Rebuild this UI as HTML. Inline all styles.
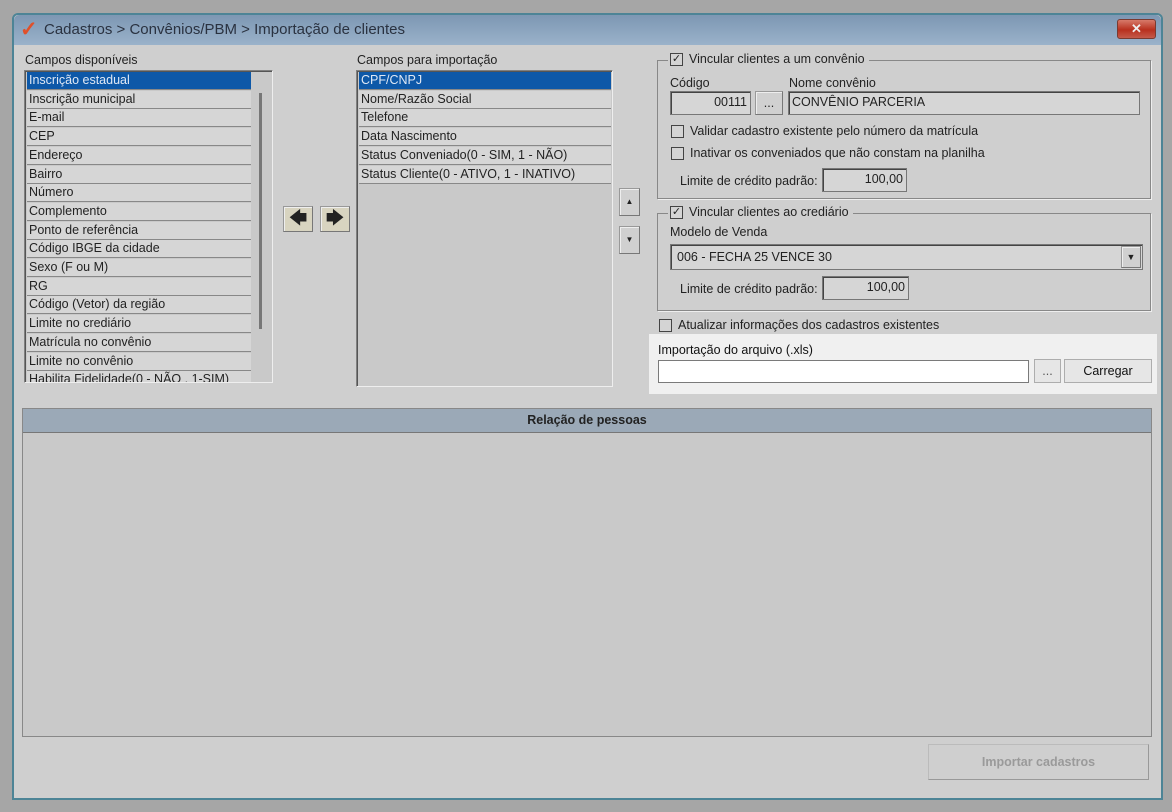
<!DOCTYPE html>
<html><head><meta charset="utf-8"><style>
*{box-sizing:border-box;margin:0;padding:0}
body{width:1172px;height:812px;background:#a6a6a6;font-family:"Liberation Sans",sans-serif;font-size:12.5px;color:#222;position:relative;overflow:hidden}
.a{position:absolute}
.win{left:12px;top:13px;width:1151px;height:787px;background:#cfcfcf;border:2px solid #4d8496;border-radius:6px 6px 0 0}
.title{left:14px;top:15px;width:1147px;height:30px;background:linear-gradient(#7d97b3,#9ab2ca);border-radius:5px 5px 0 0}
.lb{background:#c9c9c9;border:1px solid #808080;border-right-color:#eee;border-bottom-color:#eee;box-shadow:inset 1px 1px 0 #555}
.row{position:absolute;left:2px;height:18px;border-bottom:1px solid #888;background:#d6d6d6;padding-left:2px;line-height:17px;white-space:nowrap;overflow:hidden}
.sel{background:#0d58a8;color:#dfe8f5}
.inp{background:#d6d6d6;border:1px solid #777;box-shadow:inset 1px 1px 0 #444;line-height:20px;padding:0 3px}
.btn{background:#d0d0d0;border:1px solid #999;border-right-color:#777;border-bottom-color:#777;box-shadow:inset 1px 1px 0 #eee;text-align:center}
.grp{border:1px solid #888;box-shadow:1px 1px 0 #eee}
.cb{width:13px;height:13px;border:1px solid #444;background:#d4d4d4}
</style></head><body>
<div class="a win"></div>
<div class="a title"></div>
<div class="a" style="left:20px;top:17px;font-size:21px;color:#e0502a;font-weight:bold">✓</div>
<div class="a" style="left:44px;top:21px;font-size:15px;color:#2a3240">Cadastros &gt; Convênios/PBM &gt; Importação de clientes</div>
<div class="a" style="left:1117px;top:19px;width:39px;height:20px;border-radius:3px;background:linear-gradient(#d67a6a,#b8301e 55%,#c45a4a);border:1px solid #7a3a30;color:#eee;font-weight:bold;text-align:center;line-height:18px;font-size:13px">✕</div>

<div class="a" style="left:25px;top:53px">Campos disponíveis</div>
<div class="a lb" style="left:24px;top:70px;width:249px;height:313px;overflow:hidden">
<div class="row sel" style="top:1px;width:224px">Inscrição estadual</div>
<div class="row" style="top:19.7px;width:224px">Inscrição municipal</div>
<div class="row" style="top:38.4px;width:224px">E-mail</div>
<div class="row" style="top:57.1px;width:224px">CEP</div>
<div class="row" style="top:75.8px;width:224px">Endereço</div>
<div class="row" style="top:94.5px;width:224px">Bairro</div>
<div class="row" style="top:113.2px;width:224px">Número</div>
<div class="row" style="top:131.9px;width:224px">Complemento</div>
<div class="row" style="top:150.6px;width:224px">Ponto de referência</div>
<div class="row" style="top:169.3px;width:224px">Código IBGE da cidade</div>
<div class="row" style="top:188px;width:224px">Sexo (F ou M)</div>
<div class="row" style="top:206.7px;width:224px">RG</div>
<div class="row" style="top:225.4px;width:224px">Código (Vetor) da região</div>
<div class="row" style="top:244.1px;width:224px">Limite no crediário</div>
<div class="row" style="top:262.8px;width:224px">Matrícula no convênio</div>
<div class="row" style="top:281.5px;width:224px">Limite no convênio</div>
<div class="row" style="top:300.2px;width:224px">Habilita Fidelidade(0 - NÃO , 1-SIM)</div>
<div class="a" style="left:234px;top:22px;width:3px;height:236px;background:#777"></div>
</div>

<div class="a btn" style="left:283px;top:206px;width:30px;height:26px;background:#d8d4c0;font-size:18px;line-height:22px">🡄</div>
<div class="a btn" style="left:320px;top:206px;width:30px;height:26px;background:#d8d4c0;font-size:18px;line-height:22px">🡆</div>

<div class="a" style="left:357px;top:53px">Campos para importação</div>
<div class="a lb" style="left:356px;top:70px;width:257px;height:317px">
<div class="row sel" style="top:1px;width:252px">CPF/CNPJ</div>
<div class="row" style="top:19.7px;width:252px">Nome/Razão Social</div>
<div class="row" style="top:38.4px;width:252px">Telefone</div>
<div class="row" style="top:57.1px;width:252px">Data Nascimento</div>
<div class="row" style="top:75.8px;width:252px">Status Conveniado(0 - SIM, 1 - NÃO)</div>
<div class="row" style="top:94.5px;width:252px">Status Cliente(0 - ATIVO, 1 - INATIVO)</div>
</div>
<div class="a btn" style="left:619px;top:188px;width:21px;height:28px;font-size:8px;line-height:26px">▲</div>
<div class="a btn" style="left:619px;top:226px;width:21px;height:28px;font-size:8px;line-height:26px">▼</div>

<div class="a grp" style="left:657px;top:60px;width:494px;height:139px"></div>
<div class="a" style="left:668px;top:52px;background:#cfcfcf;padding:0 4px 0 2px;display:flex;gap:6px;align-items:center"><div class="cb" style="font-size:11px;line-height:11px;text-align:center">✓</div>Vincular clientes a um convênio</div>
<div class="a" style="left:670px;top:76px">Código</div>
<div class="a" style="left:789px;top:76px">Nome convênio</div>
<div class="a inp" style="left:670px;top:91px;width:81px;height:24px;text-align:right">00111</div>
<div class="a btn" style="left:755px;top:91px;width:28px;height:24px;line-height:22px">...</div>
<div class="a inp" style="left:788px;top:91px;width:352px;height:24px">CONVÊNIO PARCERIA</div>
<div class="a" style="left:671px;top:124px;display:flex;gap:6px;align-items:center"><div class="cb"></div>Validar cadastro existente pelo número da matrícula</div>
<div class="a" style="left:671px;top:146px;display:flex;gap:6px;align-items:center"><div class="cb"></div>Inativar os conveniados que não constam na planilha</div>
<div class="a" style="left:680px;top:174px">Limite de crédito padrão:</div>
<div class="a inp" style="left:822px;top:168px;width:85px;height:24px;text-align:right">100,00</div>

<div class="a grp" style="left:657px;top:213px;width:494px;height:98px"></div>
<div class="a" style="left:668px;top:205px;background:#cfcfcf;padding:0 4px 0 2px;display:flex;gap:6px;align-items:center"><div class="cb" style="font-size:11px;line-height:11px;text-align:center">✓</div>Vincular clientes ao crediário</div>
<div class="a" style="left:670px;top:225px">Modelo de Venda</div>
<div class="a inp" style="left:670px;top:244px;width:473px;height:26px;line-height:24px;padding-left:6px">006 - FECHA 25 VENCE 30</div>
<div class="a btn" style="left:1121px;top:246px;width:20px;height:22px;font-size:9px;line-height:20px">▼</div>
<div class="a" style="left:680px;top:282px">Limite de crédito padrão:</div>
<div class="a inp" style="left:822px;top:276px;width:87px;height:24px;text-align:right">100,00</div>

<div class="a" style="left:659px;top:318px;display:flex;gap:6px;align-items:center"><div class="cb"></div>Atualizar informações dos cadastros existentes</div>

<div class="a" style="left:649px;top:334px;width:508px;height:60px;background:#f0f0f0"></div>
<div class="a" style="left:658px;top:343px;color:#111">Importação do arquivo (.xls)</div>
<div class="a" style="left:658px;top:360px;width:371px;height:23px;background:#fff;border:1px solid #7a7a7a"></div>
<div class="a" style="left:1034px;top:359px;width:27px;height:24px;background:#e6e6e6;border:1px solid #adadad;text-align:center;line-height:22px;color:#555">...</div>
<div class="a" style="left:1064px;top:359px;width:88px;height:24px;background:#e6e6e6;border:1px solid #adadad;text-align:center;line-height:22px;color:#111">Carregar</div>

<div class="a" style="left:22px;top:408px;width:1130px;height:329px;background:#c9c9c9;border:1px solid #888"></div>
<div class="a" style="left:23px;top:409px;width:1128px;height:24px;background:#9ba9b7;border-bottom:1px solid #777;text-align:center;font-weight:bold;line-height:22px;color:#222">Relação de pessoas</div>

<div class="a" style="left:928px;top:744px;width:221px;height:36px;border:1px solid #bbb;border-right-color:#999;border-bottom-color:#999;background:#cfcfcf;text-align:center;line-height:34px;font-weight:bold;color:#9a9a9a">Importar cadastros</div>
</body></html>
